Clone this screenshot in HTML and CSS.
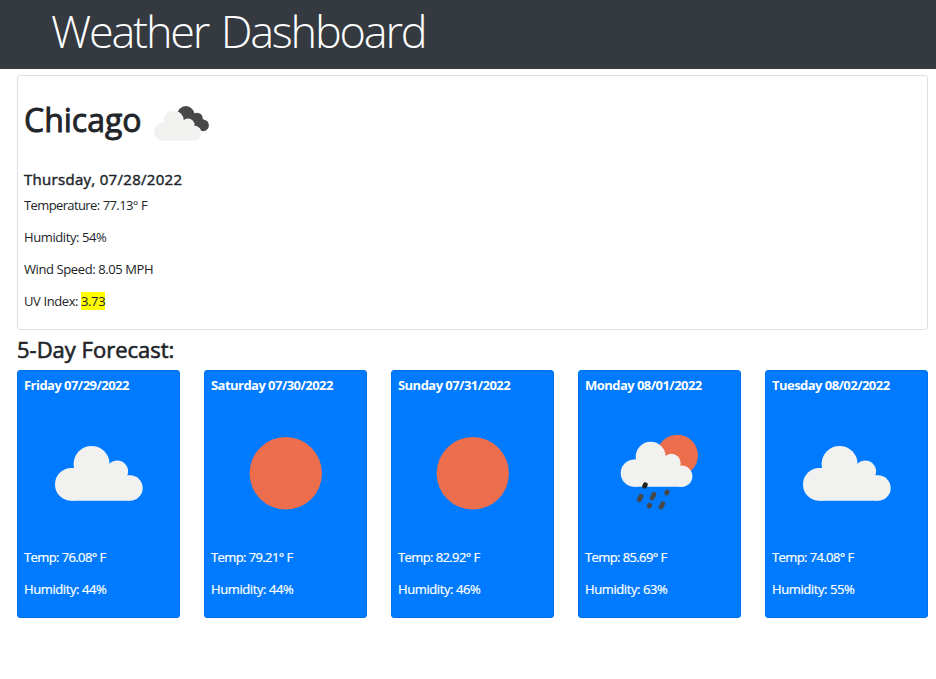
FILE: index.html
```html
<!DOCTYPE html>
<html lang="en">
<head>
<meta charset="utf-8">
<title>Weather Dashboard</title>
<link rel="stylesheet" href="styles.css">
</head>
<body>
<svg width="0" height="0" class="defs" aria-hidden="true">
  <defs>
    <symbol id="cloud" viewBox="0 0 149 149">
      <g fill="#f1f1f0"><circle cx="47.3" cy="85.4" r="16.3"/><circle cx="67.6" cy="65" r="18"/><circle cx="93.3" cy="72.3" r="10.8"/><circle cx="105.9" cy="89" r="12.8"/><path d="M47 69.1 50 68.9 67 60 85.3 65.5 93 70 103.8 76.8 106 76.2V101.7H47z"/></g>
    </symbol>
    <symbol id="sun" viewBox="0 0 149 149"><circle cx="74.8" cy="74.3" r="36.2" fill="#ec6e4c"/></symbol>
    <symbol id="rain" viewBox="0 0 149 149">
      <circle cx="92.4" cy="56.3" r="20.6" fill="#ec6e4c"/>
      <g fill="#f1f1f0"><circle cx="49.3" cy="74.2" r="13.6"/><circle cx="65.7" cy="57.8" r="15"/><circle cx="86.5" cy="64" r="9.2"/><circle cx="96.7" cy="77.2" r="10.7"/><path d="M49 60.6 51 60.4 66 50 80.3 57.5 87 62 95.3 67 97 66.5V87.8H49z"/></g>
      <g stroke="#484849" stroke-width="4.8" stroke-linecap="round"><path d="M59.6 87.2 60.3 85.7" stroke="#222"/><path d="M54.3 100.8 56 97.2M67.2 99 69 95.3M81.7 94 82.2 92.9M64.2 107 64.8 106.2M76.1 108 77.7 104.7"/></g>
    </symbol>
  </defs>
</svg>
<header class="masthead"><h1>Weather Dashboard</h1></header>
<main>
  <section class="current">
    <div class="place">
      <h2>Chicago</h2>
      <svg class="now" viewBox="142 84 80 80" aria-hidden="true">
        <g fill="#484849"><circle cx="185.8" cy="114.8" r="8.7"/><circle cx="197" cy="118.4" r="5.7"/><circle cx="203" cy="125.3" r="5.9"/><path d="M180 117 192 113 206 121 203 131.1H196z"/></g>
        <g fill="#fff"><circle cx="173.5" cy="120.8" r="10.3"/><circle cx="188" cy="125" r="6.5"/><circle cx="194" cy="133.5" r="7.8"/></g>
        <g fill="#f1f1f0"><circle cx="163" cy="131.7" r="9"/><circle cx="173.3" cy="120.8" r="9.8"/><circle cx="187.6" cy="125.2" r="6.2"/><circle cx="194" cy="133.6" r="7.2"/><path d="M163 122.7 164.2 122.6 173 118 183 121.5 188 124 193.3 127 194.2 126.6V140.7H163z"/></g>
      </svg>
    </div>
    <h3>Thursday, 07/28/2022</h3>
    <p class="temp">Temperature: 77.13° F</p>
    <p>Humidity: 54%</p>
    <p>Wind Speed: 8.05 MPH</p>
    <p>UV Index: <span class="uv">3.73</span></p>
  </section>
  <h2 class="forecast-title">5-Day Forecast:</h2>
  <section class="forecast">
    <article class="day"><h4>Friday 07/29/2022</h4><svg><use href="#cloud"/></svg><p class="temp">Temp: 76.08° F</p><p>Humidity: 44%</p></article>
    <article class="day"><h4>Saturday 07/30/2022</h4><svg><use href="#sun"/></svg><p class="temp">Temp: 79.21° F</p><p>Humidity: 44%</p></article>
    <article class="day"><h4>Sunday 07/31/2022</h4><svg><use href="#sun"/></svg><p class="temp">Temp: 82.92° F</p><p>Humidity: 46%</p></article>
    <article class="day"><h4>Monday 08/01/2022</h4><svg><use href="#rain"/></svg><p class="temp">Temp: 85.69° F</p><p>Humidity: 63%</p></article>
    <article class="day"><h4>Tuesday 08/02/2022</h4><svg><use href="#cloud"/></svg><p class="temp">Temp: 74.08° F</p><p>Humidity: 55%</p></article>
  </section>
</main>
</body>
</html>
```
FILE: styles.css
```css
* { box-sizing: border-box; }
body { margin: 0; background: #fff; color: #212529; font: 400 13px/20px "Open Sans", "Noto Sans", sans-serif; letter-spacing: -0.4px; }
h1, h2, h3, h4, p { margin: 0; }
.defs { display: none; }
.masthead { height: 69px; padding: 4px 0 0 51px; background: #343a40; color: #fff; }
h1 { font-size: 45px; line-height: 54px; font-weight: 300; letter-spacing: -2.2px; word-spacing: 3px; }
main { padding: 6px 8px 0 17px; }
.current { height: 255px; padding: 8px 6px; border: 1px solid #dfdfdf; border-radius: 3px; }
.place { display: flex; align-items: center; height: 80px; gap: 1px; }
h2 { font-weight: 400; -webkit-text-stroke: 0.6px currentColor; }
.place h2 { width: 117px; font-size: 32px; line-height: 40px; letter-spacing: 0; margin-top: -9px; white-space: nowrap; -webkit-text-stroke-width: 0.9px; }
.now { width: 80px; height: 80px; }
h3 { margin-top: 5px; font-size: 15px; line-height: 20px; font-weight: 400; letter-spacing: 0.3px; -webkit-text-stroke: 0.45px currentColor; }
.current p { height: 32px; padding-top: 6px; }
.current .temp { letter-spacing: -0.62px; word-spacing: 0.5px; }
.uv { background: #ff0; color: #212529; }
.forecast-title { height: 40px; margin-top: -1px; margin-bottom: 1px; font-size: 22px; line-height: 40px; letter-spacing: 0; }
.forecast { display: grid; grid-template-columns: repeat(5, 163px); column-gap: 24px; }
.day { height: 248px; padding: 4px 6px; background: #007bff; border: 1px solid #0071eb; border-radius: 3px; color: #fff; white-space: nowrap; }
.day h4 { font-size: 13px; line-height: 20px; font-weight: 700; letter-spacing: -0.54px; }
.day svg { display: block; width: 149px; height: 149px; margin: 4px 0 -1px; }
.day p { height: 32px; -webkit-text-stroke: 0.2px currentColor; }
.day .temp { letter-spacing: -0.6px; }
```
